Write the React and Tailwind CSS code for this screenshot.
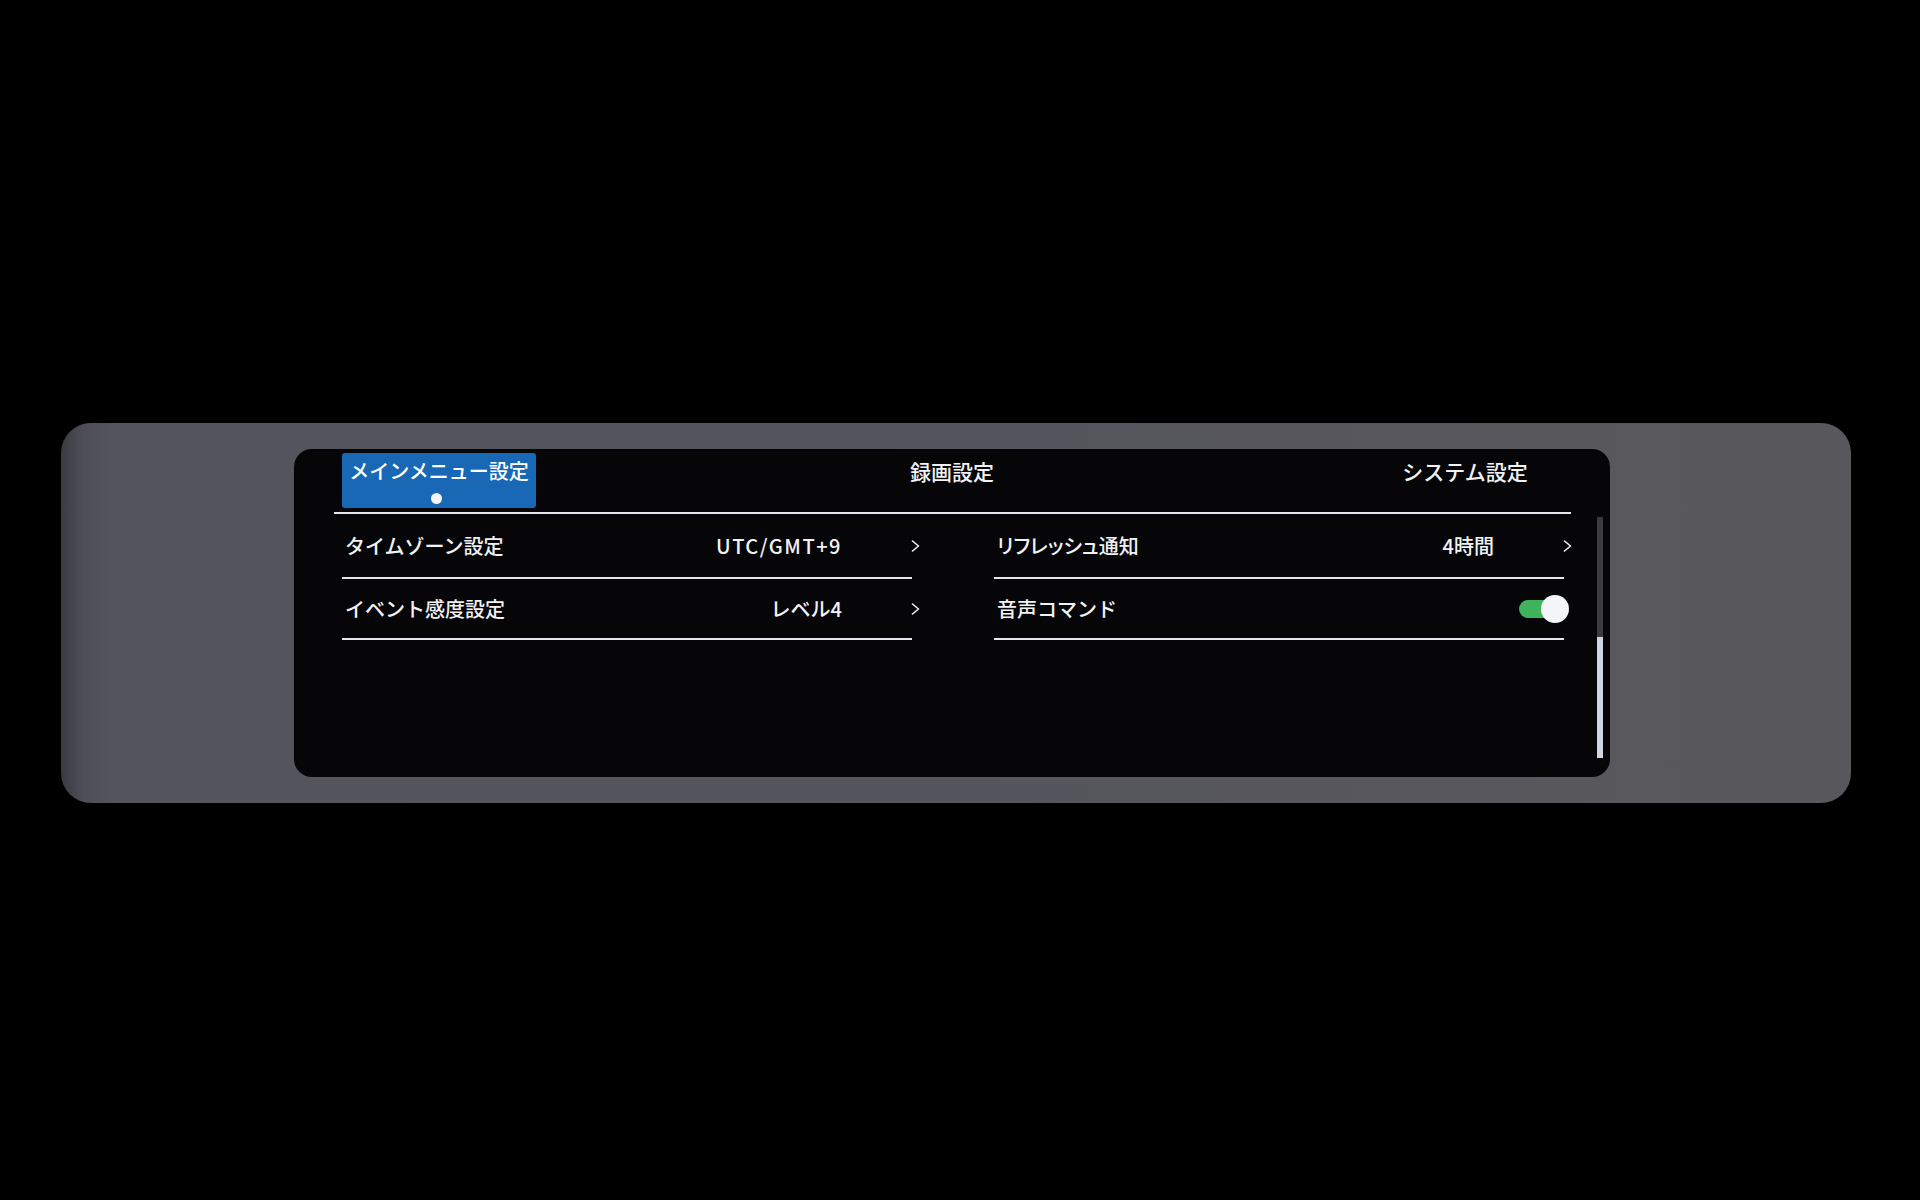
import React from "react";

const font = { fontFamily: '"Noto Sans CJK JP", "Noto Sans", sans-serif' };

function Chevron() {
  return (
    <svg className="ml-[69px] w-[9px] h-[12px] shrink-0" viewBox="0 0 9 12" fill="none">
      <path d="M1.5 1 L7.5 6 L1.5 11" stroke="#f0f0f2" strokeWidth="1.6" strokeLinecap="round" strokeLinejoin="round" />
    </svg>
  );
}

function Row({ label, value, h, toggle, valueClass = "", labelClass = "" }) {
  return (
    <div className="w-[578px] flex flex-col">
      <div className={`flex items-center ${h} pl-[3px]`}>
        <span className={`flex-1 text-[20px] leading-[24px] font-medium text-[#f2f2f4] ${labelClass}`}>{label}</span>
        {toggle ? (
          <div className="relative w-[50px] h-[28px] mr-[3px]">
            <div className="absolute left-0 top-[5px] w-[42px] h-[18px] rounded-full bg-[#3fb35c]" />
            <div className="absolute right-0 top-0 w-[28px] h-[28px] rounded-full bg-[#f4f5f8]" />
          </div>
        ) : (
          <>
            <span className={`text-[20px] leading-[24px] font-medium text-[#f2f2f4] ${valueClass}`}>{value}</span>
            <Chevron />
          </>
        )}
      </div>
      <div className="w-[570px] h-[2px] bg-[#e4e6ee]" />
    </div>
  );
}

export default function App() {
  return (
    <div className="w-[1920px] min-h-[1200px] bg-black pt-[423px] pl-[61px]" style={font}>
      <div className="w-[1790px] h-[380px] rounded-[30px] bg-[linear-gradient(90deg,#3a3a41_0%,#4e4e57_1.2%,#54545c_3%,#55555d_50%,#58585c_100%)] pt-[26px] pl-[233px]">
        <div className="w-[1316px] h-[328px] rounded-[18px] bg-[#060608] flex">
          <div className="flex-1 pl-[40px] flex flex-col">
            <div className="flex pl-[8px] pt-[4px] gap-[319px]">
              <div className="w-[194px] h-[55px] rounded-[3px] bg-[#1868b6] flex flex-col items-center pt-[6px]">
                <span className="text-[20px] leading-[24px] font-medium text-white">メインメニュー設定</span>
                <span className="mt-[10px] mr-[5px] w-[11px] h-[11px] rounded-full bg-[#f4f6fa]" />
              </div>
              <div className="w-[194px] h-[55px] flex flex-col items-center pt-[6px]">
                <span className="text-[21px] leading-[24px] font-medium text-[#f2f2f4]">録画設定</span>
              </div>
              <div className="w-[194px] h-[55px] flex flex-col items-center pt-[6px]">
                <span className="text-[21px] leading-[24px] font-medium text-[#f2f2f4]">システム設定</span>
              </div>
            </div>
            <div className="mt-[4px] w-[1237px] h-[2px] bg-[#e4e6ee]" />
            <div className="flex pl-[8px] gap-[74px]">
              <div className="flex flex-col">
                <Row label="タイムゾーン設定" value="UTC/GMT+9" h="h-[63px]" valueClass="tracking-[1.5px]" />
                <Row label="イベント感度設定" value="レベル4" h="h-[59px]" />
              </div>
              <div className="flex flex-col">
                <Row label="リフレッシュ通知" value="4時間" h="h-[63px]" labelClass="[font-feature-settings:'palt']" />
                <Row label="音声コマンド" h="h-[59px]" toggle />
              </div>
            </div>
          </div>
          <div className="pt-[68px] pr-[7px]">
            <div className="w-[6px] h-[241px] bg-[#3a3a3f] flex flex-col justify-end">
              <div className="w-[6px] h-[121px] bg-[#d2d6e0]" />
            </div>
          </div>
        </div>
      </div>
    </div>
  );
}
